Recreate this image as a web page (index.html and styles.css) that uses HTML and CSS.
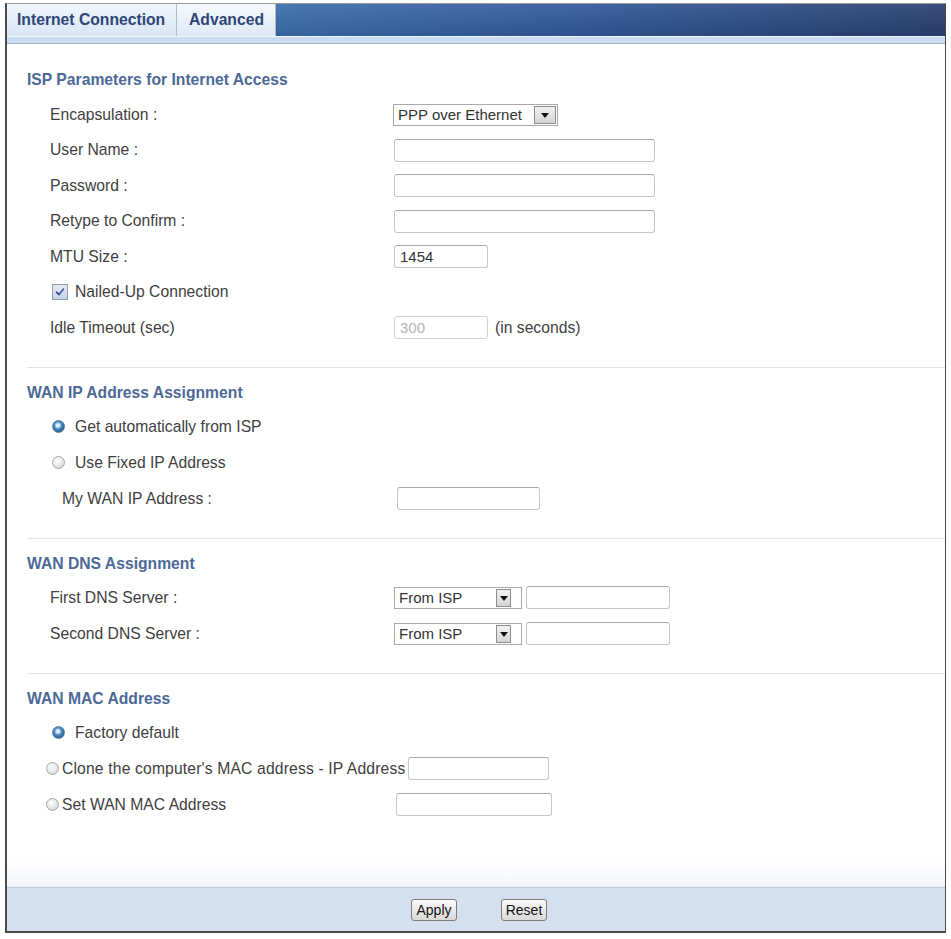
FILE: index.html
```html
<!DOCTYPE html>
<html lang="en">
<head>
<meta charset="utf-8">
<title>Internet Connection</title>
<link rel="stylesheet" href="styles.css">
</head>
<body>
<div class="frame">
  <div class="tabs">
    <div class="tab tab-first">Internet Connection</div>
    <div class="tab tab-second">Advanced</div>
    <div class="tab-fill"></div>
  </div>
  <div class="tab-strip"></div>

  <form class="content">
    <section class="group group-first">
      <h2 class="group-title">ISP Parameters for Internet Access</h2>
      <div class="row">
        <span class="label">Encapsulation :</span>
        <div class="select select-encap"><span class="select-text">PPP over Ethernet</span><span class="select-btn"></span></div>
      </div>
      <div class="row">
        <span class="label">User Name :</span>
        <input class="field field-long" type="text">
      </div>
      <div class="row">
        <span class="label">Password :</span>
        <input class="field field-long" type="password">
      </div>
      <div class="row">
        <span class="label">Retype to Confirm :</span>
        <input class="field field-long" type="password">
      </div>
      <div class="row">
        <span class="label">MTU Size :</span>
        <input class="field field-short" type="text" value="1454">
      </div>
      <div class="row row-option">
        <span class="checkbox"><svg viewBox="0 0 16 16" width="14" height="14"><path d="M4 8.2 L6.8 11 L12 4.6" fill="none" stroke="#2b4c97" stroke-width="1.8" stroke-linecap="round" stroke-linejoin="round"/></svg></span>
        <span>Nailed-Up Connection</span>
      </div>
      <div class="row">
        <span class="label">Idle Timeout (sec)</span>
        <input class="field field-short field-disabled" type="text" value="300" disabled>
        <span class="unit">(in seconds)</span>
      </div>
    </section>

    <div class="divider"></div>

    <section class="group">
      <h2 class="group-title">WAN IP Address Assignment</h2>
      <div class="row row-option">
        <span class="radio radio-on"></span>
        <span>Get automatically from ISP</span>
      </div>
      <div class="row row-option">
        <span class="radio"></span>
        <span>Use Fixed IP Address</span>
      </div>
      <div class="row row-sub">
        <span class="label label-sub">My WAN IP Address :</span>
        <input class="field field-mid" type="text">
      </div>
    </section>

    <div class="divider"></div>

    <section class="group">
      <h2 class="group-title">WAN DNS Assignment</h2>
      <div class="row">
        <span class="label">First DNS Server :</span>
        <div class="select select-dns"><span class="select-text">From ISP</span><span class="select-btn"></span></div>
        <input class="field field-dns" type="text">
      </div>
      <div class="row">
        <span class="label">Second DNS Server :</span>
        <div class="select select-dns"><span class="select-text">From ISP</span><span class="select-btn"></span></div>
        <input class="field field-dns" type="text">
      </div>
    </section>

    <div class="divider"></div>

    <section class="group">
      <h2 class="group-title">WAN MAC Address</h2>
      <div class="row row-option">
        <span class="radio radio-on"></span>
        <span>Factory default</span>
      </div>
      <div class="row row-tight">
        <span class="radio radio-tight"></span>
        <span class="clone-text">Clone the computer's MAC address - IP Address</span>
        <input class="field field-clone" type="text">
      </div>
      <div class="row row-tight">
        <span class="radio radio-tight"></span>
        <span class="label label-mac">Set WAN MAC Address</span>
        <input class="field field-mac" type="text">
      </div>
    </section>
  </form>

  <div class="footer">
    <button class="btn" type="button">Apply</button>
    <button class="btn" type="button">Reset</button>
  </div>
</div>
</body>
</html>
```

FILE: styles.css
```css
* {
  box-sizing: border-box;
}

html,
body {
  margin: 0;
  background: #fff;
}

body {
  padding: 3px 0 0 5px;
  font-family: "Liberation Sans", Arial, sans-serif;
  font-size: 15.7px;
  color: #404040;
}

/* outer panel */
.frame {
  width: 941px;
  height: 930px;
  display: flex;
  flex-direction: column;
  border: 2px solid #4a4a4a;
  border-top: 1px solid #9a9a9a;
  border-right-width: 1px;
}

/* tab bar */
.tabs {
  display: flex;
  height: 32px;
  flex-shrink: 0;
}

.tab {
  display: flex;
  align-items: center;
  font-weight: bold;
  color: #2d4677;
  background: linear-gradient(#f1f6fc, #d9e6f4);
  border-right: 1px solid #aebcd0;
}

.tab-first {
  width: 170px;
  padding-left: 10px;
}

.tab-second {
  width: 99px;
  padding-left: 12px;
  background: linear-gradient(#f5f9fd, #dfe9f6);
}

.tab-fill {
  flex: 1;
  background:
    linear-gradient(rgba(255, 255, 255, 0.08), rgba(0, 0, 0, 0.08)),
    linear-gradient(to right, #3b6cab, #31599a 45%, #2c4a82 75%, #283f6f);
}

.tab-strip {
  height: 8px;
  flex-shrink: 0;
  background: linear-gradient(#eef5fc 0 1px, #c9dcf1 1px);
  border-bottom: 1px solid #a3b0c2;
}

/* form body */
.content {
  flex: 1;
  margin: 0;
  padding: 26px 0 0 20px;
  background: linear-gradient(#fff calc(100% - 28px), #f1f5fb);
}

.group-title {
  margin: 0 0 6px;
  height: 20px;
  line-height: 20px;
  font-size: 15.7px;
  font-weight: bold;
  color: #4c6997;
}

.group-first .group-title {
  margin-bottom: 7px;
}

.row {
  display: flex;
  align-items: center;
  height: 36px;
  padding-left: 23px;
}

.group-first .row {
  height: 35.5px;
}

.label {
  width: 344px;
  flex-shrink: 0;
}

.row-option {
  padding-left: 25px;
}

.row-sub {
  padding-left: 35px;
}

.label-sub {
  width: 335px;
}

.row-tight {
  padding-left: 19px;
}

.label-mac {
  width: 334px;
}

.divider {
  height: 1px;
  margin: 21px 0 15px;
  background: #e4e4e4;
}

/* inputs */
.field {
  height: 23px;
  margin: 0;
  padding: 0 5px;
  border: 1px solid #c6c6c6;
  border-top-color: #a8a8a8;
  border-radius: 3px;
  background: #fff;
  font-family: inherit;
  font-size: 15px;
  color: #333;
  outline: none;
}

.field-long {
  width: 261px;
}

.field-short {
  width: 94px;
}

.field-mid {
  width: 143px;
}

.field-dns {
  width: 144px;
  margin-left: 4px;
}

.field-clone {
  width: 141px;
  margin-left: 3px;
}

.field-mac {
  width: 156px;
}

.field-disabled {
  color: #b4b4b4;
  background: #fff;
  border-color: #d2d2d2;
}

.unit {
  margin-left: 7px;
}

/* drop-down lists */
.select {
  display: flex;
  align-items: center;
  height: 22px;
  padding-left: 4px;
  border: 1px solid #a9a9a9;
  background: #fff;
  color: #333;
  font-size: 15px;
}

.select-encap {
  width: 165px;
  margin-left: -1px;
}

.select-dns {
  width: 128px;
}

.select-text {
  white-space: nowrap;
}

.select-btn {
  position: relative;
  width: 22px;
  height: 18px;
  margin-left: auto;
  margin-right: 1px;
  border: 1px solid #8c8c8c;
  background: linear-gradient(#f2f2f2, #d4d4d4);
}

.select-dns .select-btn {
  width: 15px;
  margin-right: 10px;
}

.select-btn::after {
  content: "";
  position: absolute;
  left: 50%;
  top: 50%;
  margin: -2px 0 0 -4px;
  border-left: 4px solid transparent;
  border-right: 4px solid transparent;
  border-top: 5px solid #111;
}

/* check box and radio buttons */
.checkbox {
  display: flex;
  align-items: center;
  justify-content: center;
  width: 16px;
  height: 16px;
  margin-right: 7px;
  border: 1px solid #8f9db4;
  background: linear-gradient(#e6ebf3, #c8d2e2);
}

.radio {
  width: 13px;
  height: 13px;
  margin-right: 10px;
  flex-shrink: 0;
  border-radius: 50%;
  border: 1px solid #a9a9a9;
  background: radial-gradient(circle at 40% 35%, #ffffff 0, #ececec 40%, #cfcfcf 100%);
}

.radio-on {
  border-color: #5c7fa3;
  background: radial-gradient(circle at 45% 40%, #d8eefc 0 18%, #4a8cc4 40%, #2a5f90 75%, #1c4470 100%);
}

.radio-tight {
  margin-right: 3px;
}

.clone-text {
  white-space: nowrap;
  letter-spacing: 0.15px;
}

/* bottom button bar */
.footer {
  height: 44px;
  flex-shrink: 0;
  display: flex;
  align-items: center;
  justify-content: center;
  gap: 44px;
  padding-left: 6px;
  background: #d4e0ee;
  border-top: 1px solid #bfcde0;
}

.btn {
  width: 46px;
  height: 22px;
  padding: 0;
  border: 1px solid #7e7e7e;
  border-radius: 3px;
  background: linear-gradient(#fafafa, #d9d9d9);
  font-family: "Liberation Sans", Arial, sans-serif;
  font-size: 14px;
  color: #111;
}
```
